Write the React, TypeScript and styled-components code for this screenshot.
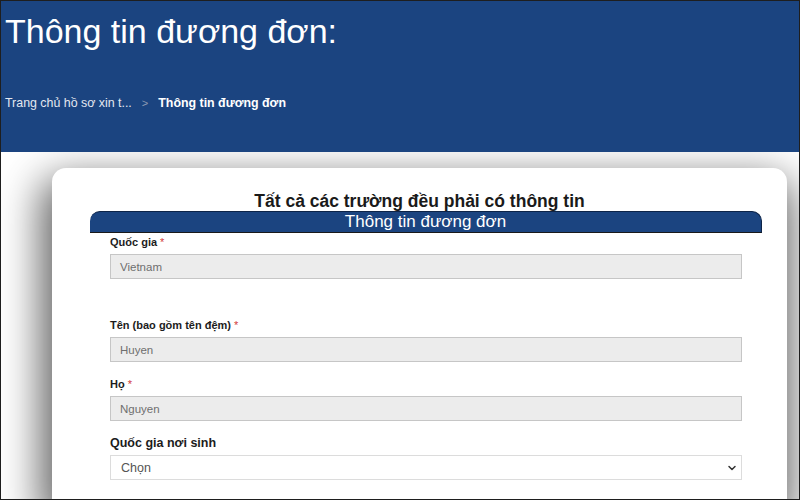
import React from 'react'
import styled, { createGlobalStyle } from 'styled-components'
import { ChevronDown } from 'lucide-react'

const GlobalStyle = createGlobalStyle`
  html, body {
    margin: 0;
    padding: 0;
    background: #ffffff;
  }
  * {
    box-sizing: border-box;
  }
`

const Page = styled.div`
  width: 800px;
  height: 500px;
  border: 1px solid #1e1e1e;
  overflow: hidden;
  background: #ffffff;
  font-family: "Liberation Sans", Arial, sans-serif;
  display: flex;
  flex-direction: column;
`

const Header = styled.header`
  position: relative;
  z-index: 2;
  height: 151px;
  flex-shrink: 0;
  background: #1b4480;
  padding: 13px 0 0 4px;
  display: flex;
  flex-direction: column;
`

const PageTitle = styled.h1`
  margin: 0;
  font-size: 34px;
  line-height: 1;
  font-weight: 400;
  color: #ffffff;
`

const Breadcrumb = styled.nav`
  margin-top: 47px;
  display: flex;
  align-items: center;
  font-size: 12.4px;
  line-height: 16px;
  color: #e4e8f0;
`

const CrumbSep = styled.span`
  margin: 0 10px 0 10px;
  color: #8d9ab4;
  font-size: 11px;
`

const CrumbCurrent = styled.span`
  font-weight: 700;
  color: #ffffff;
`

const Body = styled.main`
  flex: 1;
  padding: 16px 12px 0 51px;
  display: flex;
`

const Card = styled.section`
  flex: 1;
  background: #ffffff;
  border-radius: 14px 14px 0 0;
  box-shadow: -3px 18px 42px 8px rgba(0, 0, 0, 0.62);
  padding: 23px 25px 0 38px;
  position: relative;
  z-index: 1;
`

const CardTitle = styled.h2`
  margin: 0 0 0 -38px;
  padding-left: 25px;
  text-align: center;
  font-size: 17.5px;
  line-height: 20px;
  font-weight: 700;
  color: #1a1a1a;
`

const SectionBar = styled.div`
  height: 22px;
  background: #1b4480;
  border: 1px solid #0d2448;
  border-left: none;
  border-bottom-color: #1a1a1a;
  border-radius: 10px 10px 0 0;
  color: #ffffff;
  font-size: 17px;
  line-height: 20px;
  text-align: center;
`

const Fields = styled.div`
  padding: 2px 20px 0 20px;
  display: flex;
  flex-direction: column;
`

const Field = styled.div<{ $gap?: number }>`
  display: flex;
  flex-direction: column;
  margin-bottom: ${({ $gap }) => $gap ?? 15}px;
`

const Label = styled.label<{ $large?: boolean }>`
  font-size: ${({ $large }) => ($large ? '12.5px' : '11px')};
  line-height: 14px;
  font-weight: 700;
  color: #1c1c1c;
  margin-bottom: 5px;
`

const Required = styled.span`
  color: #d23a3a;
  font-weight: 400;
  margin-left: 3px;
`

const TextInput = styled.div`
  height: 25px;
  background: #ececec;
  border: 1px solid #c6c6c6;
  padding-left: 9px;
  display: flex;
  align-items: center;
  font-size: 11.5px;
  color: #6f6f6f;
`

const SelectWrap = styled.div`
  position: relative;
  height: 25px;
`

const Select = styled.select`
  appearance: none;
  width: 100%;
  height: 25px;
  background: #ffffff;
  border: 1px solid #dcdcdc;
  border-radius: 0;
  padding-left: 10px;
  font-family: "Liberation Sans", Arial, sans-serif;
  font-size: 12.5px;
  color: #555555;
  outline: none;
`

const SelectIcon = styled(ChevronDown)`
  position: absolute;
  right: 4px;
  top: 7px;
  pointer-events: none;
  color: #333333;
`

const App = () => {
  return (
    <>
      <GlobalStyle />
      <Page>
        <Header>
          <PageTitle>Thông tin đương đơn:</PageTitle>
          <Breadcrumb>
            <span>Trang chủ hồ sơ xin t...</span>
            <CrumbSep>&gt;</CrumbSep>
            <CrumbCurrent>Thông tin đương đơn</CrumbCurrent>
          </Breadcrumb>
        </Header>
        <Body>
          <Card>
            <CardTitle>Tất cả các trường đều phải có thông tin</CardTitle>
            <SectionBar>Thông tin đương đơn</SectionBar>
            <Fields>
              <Field $gap={39}>
                <Label>Quốc gia<Required>*</Required></Label>
                <TextInput>Vietnam</TextInput>
              </Field>
              <Field>
                <Label>Tên (bao gồm tên đệm)<Required>*</Required></Label>
                <TextInput>Huyen</TextInput>
              </Field>
              <Field>
                <Label>Họ<Required>*</Required></Label>
                <TextInput>Nguyen</TextInput>
              </Field>
              <Field>
                <Label $large>Quốc gia nơi sinh</Label>
                <SelectWrap>
                  <Select defaultValue="">
                    <option value="">Chọn</option>
                  </Select>
                  <SelectIcon size={12} strokeWidth={3} />
                </SelectWrap>
              </Field>
            </Fields>
          </Card>
        </Body>
      </Page>
    </>
  )
}

export default App
